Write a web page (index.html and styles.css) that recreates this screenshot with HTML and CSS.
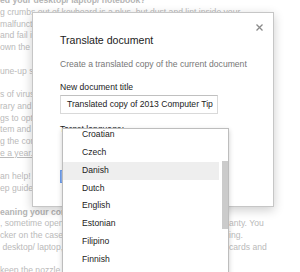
FILE: index.html
```html
<!DOCTYPE html>
<html lang="en">
<head>
  <meta charset="UTF-8" />
  <meta name="viewport" content="width=device-width, initial-scale=1.0"/>
  <title>Translate document</title>
  <link rel="stylesheet" href="styles.css">
</head>
<body>
  <div class="page">

    <div class="article">
      <div class="ln head"><span class="l">ed your desktop/ laptop/ notebook?</span></div>
      <div class="ln"><span class="l">g crumbs out of keyboard is a plus, but dust and lint inside your</span></div>
      <div class="ln"><span class="l">malfunction. Fans clogged with dust can cause your PC to</span></div>
      <div class="ln"><span class="l">and fail if it gets too hot. It is a good idea to open up and</span></div>
      <div class="ln"><span class="l">own the machine at least once a year.</span></div>
      <div class="ln"></div>
      <div class="ln"><span class="l">une-up software cleans up your registry and junk files.</span></div>
      <div class="ln"></div>
      <div class="ln"><span class="l">s of virus scanning, cleaning temp files and defragmenting</span></div>
      <div class="ln"><span class="l">rary and unused files will help speed things up. You</span></div>
      <div class="ln"><span class="l">gs to optimize your startup programs and free up</span></div>
      <div class="ln"><span class="l">tem and disk space so your computer runs smoother</span></div>
      <div class="ln"><span class="l">g the computer. We recommend doing this at least</span></div>
      <div class="ln"><span class="l"><u>e a year.</u></span></div>
      <div class="ln"></div>
      <div class="ln"><span class="l">an help!</span></div>
      <div class="ln"><span class="l">ep guide to cleaning your computer:</span></div>
      <div class="ln"></div>
      <div class="ln head"><span class="l">eaning your computer case</span></div>
      <div class="ln split"><span class="l">, sometime opening the case may void your warr</span><span class="r">anty. You</span></div>
      <div class="ln split"><span class="l">cker on the case before you begin open</span><span class="r">ing.</span></div>
      <div class="ln split"><span class="l"> desktop/ laptop, remove all the memory</span><span class="r">cards and</span></div>
      <div class="ln"></div>
      <div class="ln"><span class="l">keep the nozzle at least 4 inches away</span></div>
    </div>

    <div class="dialog">
      <span class="close">
        <svg width="7" height="7" viewBox="0 0 7 7"><path d="M0.5 0.5 L6.5 6.5 M6.5 0.5 L0.5 6.5" stroke="#8a8a8a" stroke-width="1.3" fill="none"/></svg>
      </span>
      <h2>Translate document</h2>
      <p class="desc">Create a translated copy of the current document</p>
      <label>New document title</label>
      <div class="input">Translated copy of 2013 Computer Tip</div>
      <label class="target">Target language:</label>
      <div class="select">Danish</div>
      <div class="buttons">
        <span class="btn blue">Translate</span>
        <span class="btn">Cancel</span>
      </div>
    </div>

    <div class="menu">
      <div class="list">
        <div class="item">Croatian</div>
        <div class="item">Czech</div>
        <div class="item selected">Danish</div>
        <div class="item">Dutch</div>
        <div class="item">English</div>
        <div class="item">Estonian</div>
        <div class="item">Filipino</div>
        <div class="item">Finnish</div>
        <div class="item">French</div>
      </div>
      <div class="scroll"><div class="thumb"></div></div>
    </div>

  </div>
</body>
</html>
```

FILE: styles.css
```css
body {
  margin: 0;
  font-family: 'Liberation Sans', Arial, sans-serif;
  background: white;
  overflow: hidden;
}

.page {
  position: relative;
  width: 300px;
  height: 272px;
  overflow: hidden;
}

/* faded article behind the modal */
.article {
  margin-top: -5px;
  font-size: 8.6px;
  line-height: 11.75px;
  color: #bababa;
}

.ln {
  display: flex;
  height: 11.75px;
  white-space: pre;
}

.ln .l {
  flex: none;
}

.ln.split .l {
  width: 229px;
  overflow: hidden;
}

.head {
  font-weight: bold;
  color: #b4b4b4;
}

/* dialog */
.dialog {
  position: absolute;
  left: 32px;
  top: 12px;
  width: 242px;
  box-sizing: border-box;
  padding: 20px 27px 23px;
  background: white;
  border: 1px solid #c6c6c6;
  box-shadow: 0 3px 10px rgba(0,0,0,0.2);
  color: #222;
  font-size: 8.6px;
}

.close {
  position: absolute;
  top: 11px;
  right: 10px;
  width: 7px;
  height: 7px;
}

.close svg {
  display: block;
}

.dialog h2 {
  margin: 0;
  font-size: 10.6px;
  font-weight: normal;
  line-height: 14px;
}

.desc {
  margin: 11px 0 0;
  line-height: 12px;
  color: #777;
  white-space: nowrap;
}

.dialog label {
  display: block;
  margin-top: 11px;
  line-height: 12px;
}

.dialog label.target {
  margin-top: 9px;
}

.input {
  margin-top: 2px;
  width: 158px;
  height: 19px;
  box-sizing: border-box;
  border: 1px solid #d9d9d9;
  border-top-color: #c0c0c0;
  padding-left: 6px;
  line-height: 17px;
  white-space: nowrap;
  overflow: hidden;
}

.select {
  margin-left: 3px;
  width: 164px;
  height: 18px;
  box-sizing: border-box;
  border: 1px solid #d9d9d9;
  padding-left: 6px;
  line-height: 16px;
}

.buttons {
  margin-top: 17px;
  display: flex;
  gap: 6px;
}

.btn {
  height: 13px;
  box-sizing: border-box;
  padding: 0 10px;
  border: 1px solid #c6c6c6;
  line-height: 11px;
}

.btn.blue {
  background: #8fb5f5;
  border-color: #6f9ff0;
  color: white;
}

/* open language menu */
.menu {
  position: absolute;
  left: 62px;
  top: 128px;
  width: 167px;
  height: 160px;
  box-sizing: border-box;
  display: flex;
  background: white;
  border: 1px solid #bdbdbd;
  box-shadow: 0 2px 5px rgba(0,0,0,0.2);
  overflow: hidden;
}

.list {
  width: 156px;
  margin-top: -3px;
}

.item {
  height: 17.85px;
  line-height: 17.85px;
  padding-left: 19px;
  font-size: 8.6px;
  color: #222;
}

.item.selected {
  background: #eeeeee;
}

.scroll {
  width: 9px;
}

.thumb {
  margin: 32px 0 0 3px;
  width: 6px;
  height: 68px;
  background: #cbcbcb;
}
```
